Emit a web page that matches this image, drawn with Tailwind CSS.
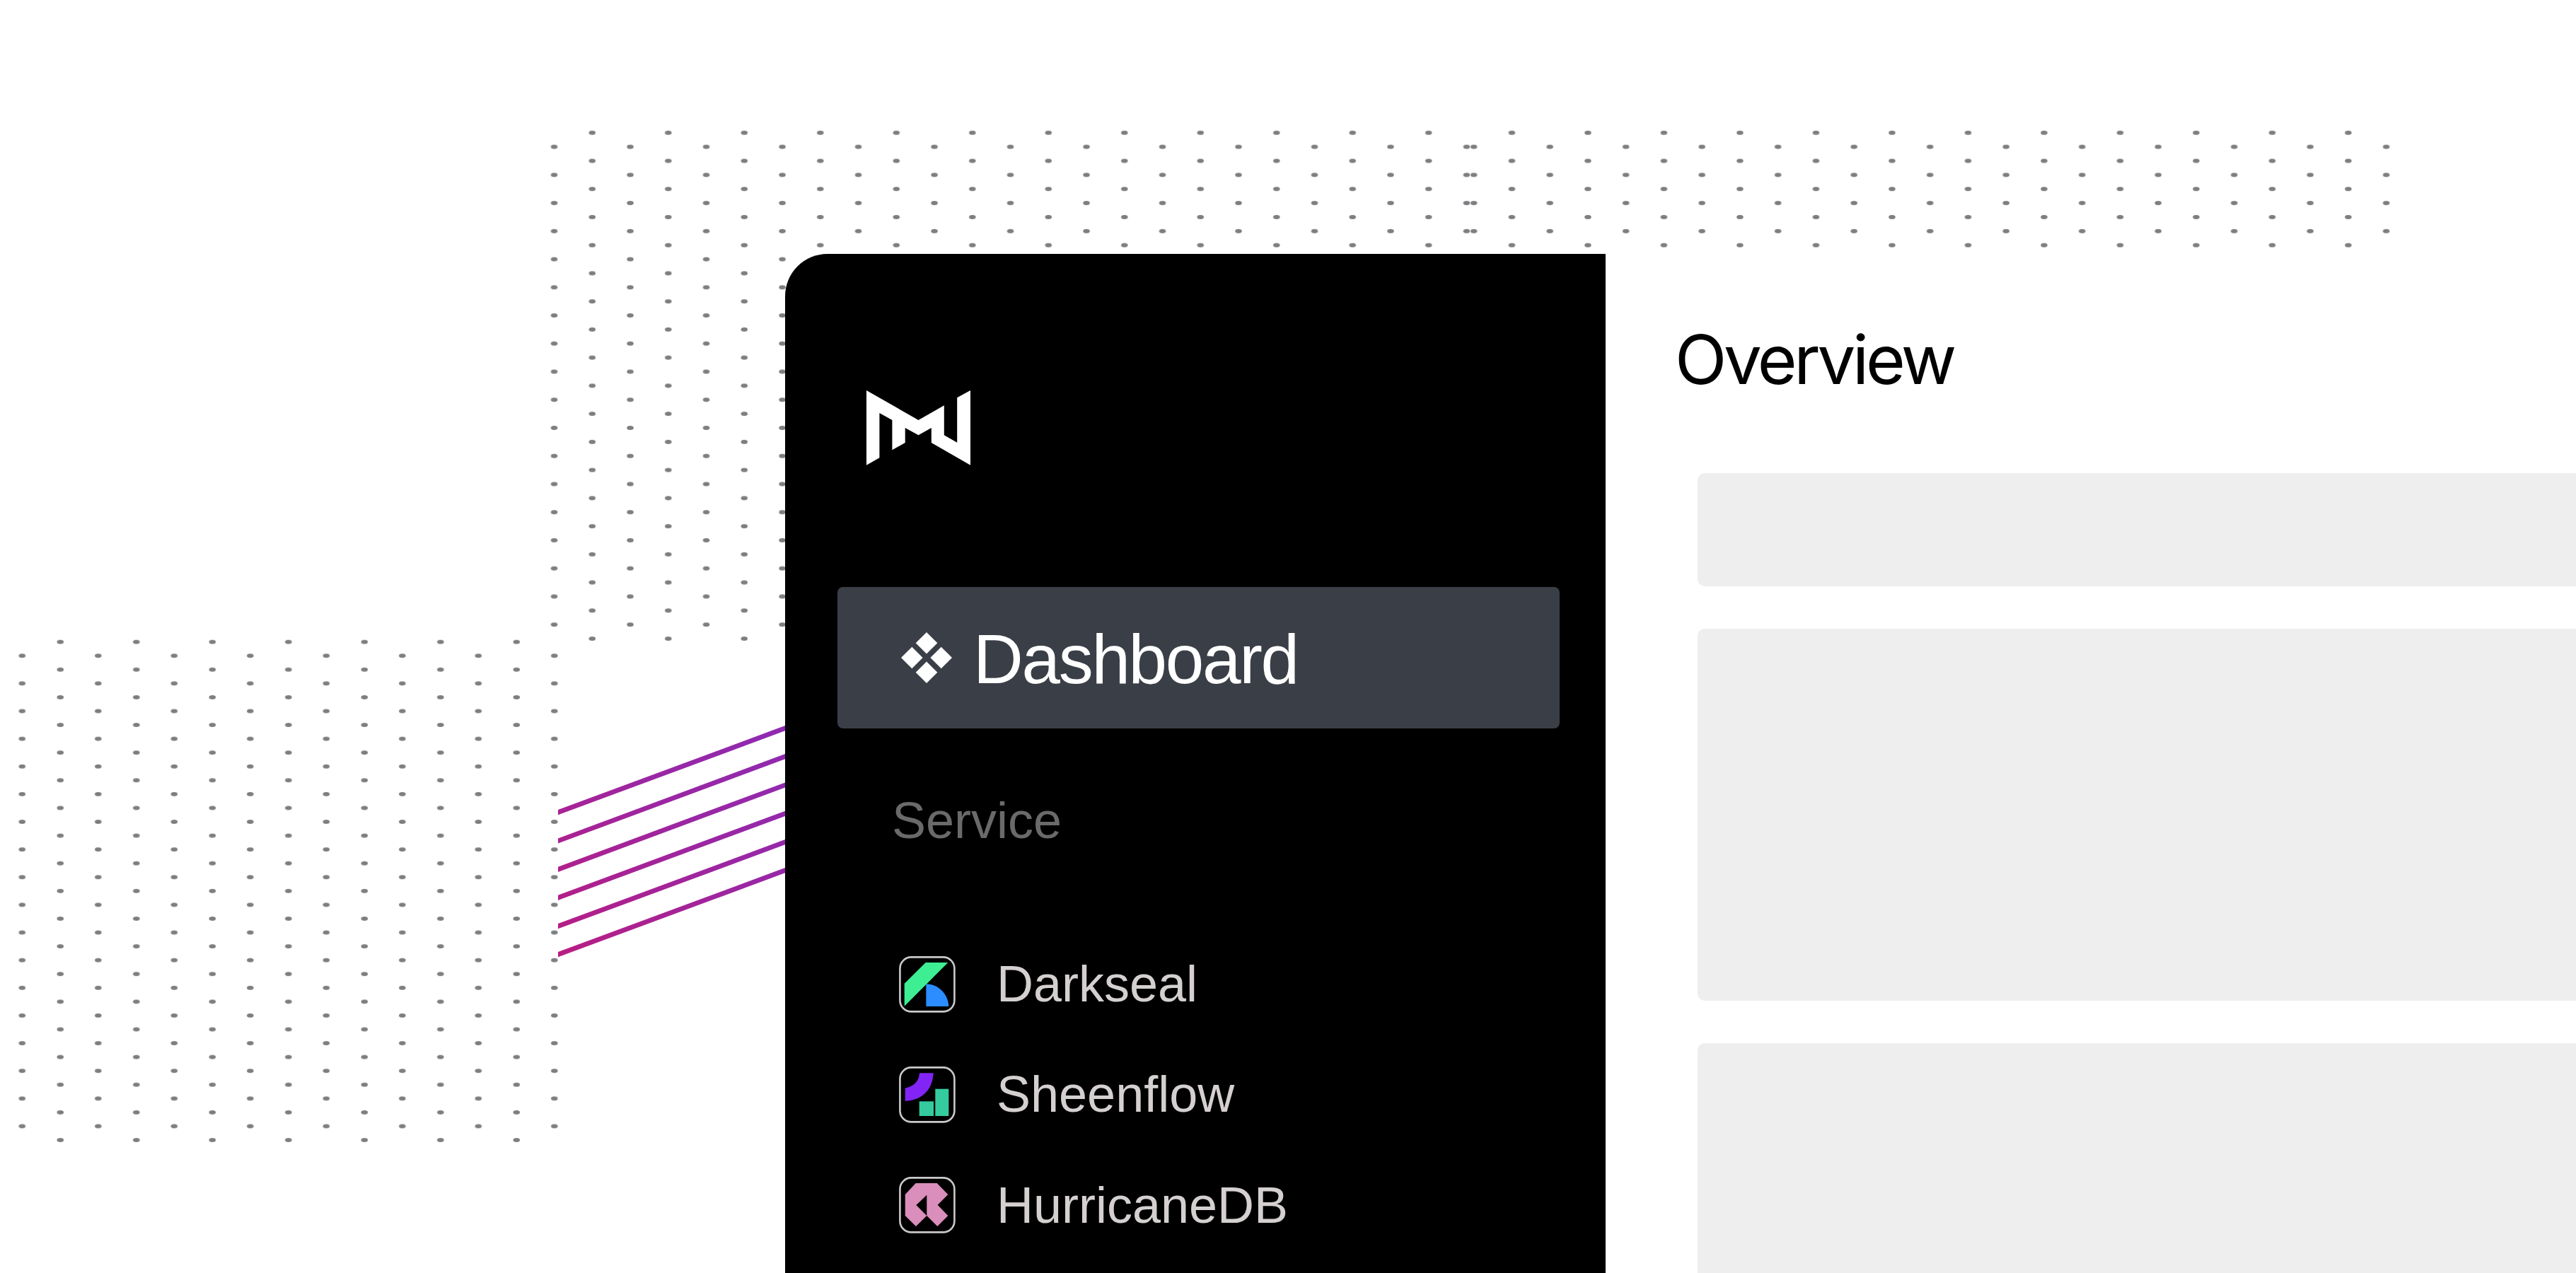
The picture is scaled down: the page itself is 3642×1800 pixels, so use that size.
<!DOCTYPE html>
<html lang="en">
<head>
    <meta charset="UTF-8">
    <title>Dashboard</title>
    <script src="https://cdn.jsdelivr.net/npm/@tailwindcss/browser@4"></script>
</head>
<body class="bg-white">
    <div class="relative w-[3642px] h-[1800px] overflow-hidden bg-white font-['Liberation_Sans',sans-serif]">

        <!-- dot fields and connector lines -->
        <svg class="absolute inset-0" width="3642" height="1800" viewBox="0 0 3642 1800">
            <defs>
                <pattern id="dotsTop" patternUnits="userSpaceOnUse" x="756.6" y="177.8" width="107.5" height="39.74">
                    <ellipse cx="80.7" cy="9.9" rx="4.8" ry="2.9" fill="#7d7e82"/>
                    <ellipse cx="26.95" cy="29.77" rx="4.8" ry="2.9" fill="#7d7e82"/>
                </pattern>
                <pattern id="dotsTopRight" patternUnits="userSpaceOnUse" x="2056.8" y="177.8" width="107.5" height="39.74">
                    <ellipse cx="80.7" cy="9.9" rx="4.8" ry="2.9" fill="#7d7e82"/>
                    <ellipse cx="26.95" cy="29.77" rx="4.8" ry="2.9" fill="#7d7e82"/>
                </pattern>
                <pattern id="dotsLeft" patternUnits="userSpaceOnUse" x="4.5" y="897.9" width="107.5" height="39.13">
                    <ellipse cx="80.8" cy="9.8" rx="4.8" ry="2.9" fill="#7d7e82"/>
                    <ellipse cx="26.8" cy="29.4" rx="4.8" ry="2.9" fill="#7d7e82"/>
                </pattern>
                <linearGradient id="lineFill" gradientUnits="userSpaceOnUse" x1="789" y1="1350" x2="1110" y2="1030">
                    <stop offset="0" stop-color="#b81d83"/>
                    <stop offset="0.6" stop-color="#9a27a4"/>
                    <stop offset="1" stop-color="#8f2ab2"/>
                </linearGradient>
            </defs>
            <rect x="778" y="180" width="1300.5" height="728" fill="url(#dotsTop)"/>
            <rect x="2078.5" y="180" width="1302.5" height="172" fill="url(#dotsTopRight)"/>
            <rect x="24" y="902" width="768" height="716" fill="url(#dotsLeft)"/>
            <g fill="url(#lineFill)">
                <polygon points="789,1145.1 1110,1026.1 1110,1033.3 789,1152.3"/>
                <polygon points="789,1185.4 1110,1066.1 1110,1073.3 789,1192.6"/>
                <polygon points="789,1225.7 1110,1106.4 1110,1113.6 789,1232.9"/>
                <polygon points="789,1265.7 1110,1146.7 1110,1153.9 789,1272.9"/>
                <polygon points="789,1306.1 1110,1187.1 1110,1194.3 789,1313.3"/>
                <polygon points="789,1346.1 1110,1227.1 1110,1234.3 789,1353.3"/>
            </g>
        </svg>

        <!-- app window -->
        <div class="absolute left-[1110px] top-[359px] right-0 bottom-0 flex">
            <aside class="w-[1160px] shrink-0 bg-black rounded-tl-[60px] pt-[193px]">
                <svg class="ml-[115px]" width="147" height="106" viewBox="0 0 147 106">
                    <polygon fill="#fff" points="0,0 73.5,42 109.8,21.3 109.8,63.3 128.2,73.7 128.2,10.3 147,0 147,105.7 91.8,74 91.8,53 73.5,63.3 54.7,53 54.7,74 36.4,84.3 36.4,42 18.4,32 18.4,95.3 0,105.7"/>
                </svg>

                <nav class="mt-[172px] ml-[74px] w-[1021px]">
                    <div class="flex items-center h-[200px] pl-[90px] pr-6 rounded-lg bg-[#3a3f47]">
                        <svg width="72" height="72" viewBox="0 0 72 72" class="shrink-0">
                            <g fill="#fff">
                                <polygon points="36,0 51.3,15.3 36,30.6 20.7,15.3"/>
                                <polygon points="36,41.4 51.3,56.7 36,72 20.7,56.7"/>
                                <polygon points="15.3,20.7 30.6,36 15.3,51.3 0,36"/>
                                <polygon points="56.7,20.7 72,36 56.7,51.3 41.4,36"/>
                            </g>
                        </svg>
                        <span class="ml-[30px] pt-[3px] text-[98px] leading-none tracking-[-2.3px] text-white">Dashboard</span>
                    </div>

                    <p class="mt-[94px] pl-[77px] text-[72px] leading-none text-[#6a6a6a]">Service</p>

                    <ul class="mt-[118px] pl-[87px] text-[72px] leading-none text-[#d4d0cf]">
                        <li class="flex items-center h-[156px] gap-[58px]">
                            <svg width="80" height="80" viewBox="0 0 80 80" class="shrink-0">
                                <rect x="1.4" y="1.4" width="77" height="77" rx="16" fill="#000" stroke="#c9c9c9" stroke-width="2.6"/>
                                <polygon fill="#3dee93" points="37.7,9 69.3,9 7.7,70.7 7.7,38.7"/>
                                <path fill="#2b8dff" d="M38.3 39.3C55.5 39.3 69.5 53.5 70.3 71H38.3Z"/>
                            </svg>
                            <span class="pb-[2px]">Darkseal</span>
                        </li>
                        <li class="flex items-center h-[156px] gap-[58px]">
                            <svg width="80" height="80" viewBox="0 0 80 80" class="shrink-0">
                                <rect x="1.4" y="1.4" width="77" height="77" rx="16" fill="#000" stroke="#c9c9c9" stroke-width="2.6"/>
                                <path fill="#8224f5" d="M29 9.3H48.7C47 34 33 47 8.7 49V30.7C21 27.5 28 22 29 9.3Z"/>
                                <rect x="28.7" y="49.3" width="20.3" height="20.7" fill="#34cc9e"/>
                                <rect x="51.3" y="31.7" width="19" height="38.3" fill="#34cc9e"/>
                            </svg>
                            <span class="pb-[2px]">Sheenflow</span>
                        </li>
                        <li class="flex items-center h-[156px] gap-[58px]">
                            <svg width="80" height="80" viewBox="0 0 80 80" class="shrink-0">
                                <rect x="1.4" y="1.4" width="77" height="77" rx="16" fill="#000" stroke="#c9c9c9" stroke-width="2.6"/>
                                <polygon fill="#d98ebb" points="23.7,9 53.7,9 69.3,25 54.7,39.7 69.3,55 54.3,70 39.3,55 39.3,25.7 24.3,40 39.3,55 24,70 8.7,55 8.7,25"/>
                            </svg>
                            <span>HurricaneDB</span>
                        </li>
                    </ul>
                </nav>
            </aside>

            <main class="flex-1 bg-white pt-[101px] pl-[98px] overflow-hidden">
                <h1 class="font-['Inter',sans-serif] text-[96px] leading-none font-normal tracking-[-4.4px] text-black">Overview</h1>
                <div class="mt-[113px] ml-[32px] flex flex-col gap-[60px]">
                    <div class="h-[160px] rounded-l-[10px] bg-[#eeeeee]"></div>
                    <div class="h-[526px] rounded-l-[10px] bg-[#eeeeee]"></div>
                    <div class="h-[400px] rounded-l-[10px] bg-[#eeeeee]"></div>
                </div>
            </main>
        </div>
    </div>
</body>
</html>
